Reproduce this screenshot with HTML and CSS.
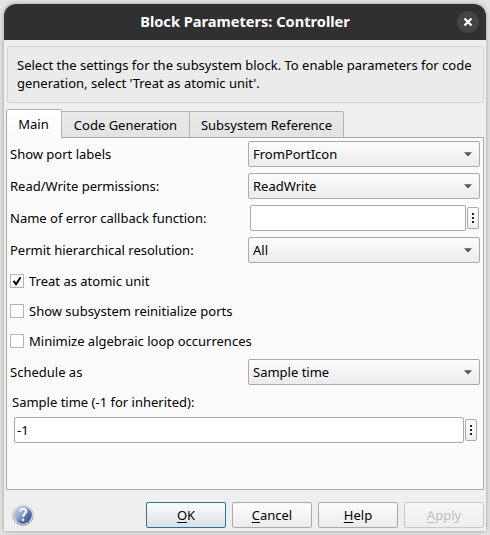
FILE: index.html
```
<!DOCTYPE html>
<html lang="en">
<head>
<meta charset="utf-8">
<title>Block Parameters: Controller</title>
<link rel="stylesheet" href="styles.css">
</head>
<body>
<main class="window">
  <header class="titlebar">
    <h1 class="title">Block Parameters: Controller</h1>
    <button class="close" aria-label="Close"><svg width="10" height="10" viewBox="0 0 10 10"><path d="M1.5 1.5 8.5 8.5M8.5 1.5 1.5 8.5" stroke="#fff" stroke-width="2.2"/></svg></button>
  </header>
  <p class="description">Select the settings for the subsystem block. To enable parameters for code<br>generation, select 'Treat as atomic unit'.</p>
  <nav class="tabs">
    <div class="tab tab-main">Main</div>
    <div class="tab tab-code">Code Generation</div>
    <div class="tab tab-ref">Subsystem Reference</div>
  </nav>
  <section class="pane">
    <div class="row"><span>Show port labels</span><div class="combo">FromPortIcon<svg class="arrow" width="8" height="5" viewBox="0 0 8 5"><path d="M0 .3h8L4 4.5z"/></svg></div></div>
    <div class="row"><span>Read/Write permissions:</span><div class="combo">ReadWrite<svg class="arrow" width="8" height="5" viewBox="0 0 8 5"><path d="M0 .3h8L4 4.5z"/></svg></div></div>
    <div class="row"><span>Name of error callback function:</span><div class="entry entry-short"><div class="field"></div><div class="more"><i></i><i></i><i></i></div></div></div>
    <div class="row"><span>Permit hierarchical resolution:</span><div class="combo">All<svg class="arrow" width="8" height="5" viewBox="0 0 8 5"><path d="M0 .3h8L4 4.5z"/></svg></div></div>
    <div class="checks">
      <div class="check"><span class="box"><svg width="12" height="12" viewBox="0 0 12 12"><path d="M2.6 5.8 5 9.2 9.6 2.3" fill="none" stroke="#000" stroke-width="2"/></svg></span>Treat as atomic unit</div>
      <div class="check"><span class="box"></span>Show subsystem reinitialize ports</div>
      <div class="check"><span class="box"></span>Minimize algebraic loop occurrences</div>
    </div>
    <div class="row"><span>Schedule as</span><div class="combo">Sample time<svg class="arrow" width="8" height="5" viewBox="0 0 8 5"><path d="M0 .3h8L4 4.5z"/></svg></div></div>
    <div class="sample-label">Sample time (-1 for inherited):</div>
    <div class="entry entry-long"><div class="field">-1</div><div class="more"><i></i><i></i><i></i></div></div>
  </section>
  <footer class="footer">
    <svg class="help" width="22" height="22" viewBox="0 0 22 22">
      <defs>
        <linearGradient id="ball" x1="0" y1="0" x2="1" y2="1"><stop offset=".1" stop-color="#c0cbe8"/><stop offset=".45" stop-color="#8fa3d3"/><stop offset=".65" stop-color="#5069aa"/><stop offset="1" stop-color="#3c5292"/></linearGradient>
        <linearGradient id="rim" x1="0" y1="0" x2="0" y2="1"><stop offset="0" stop-color="#dcdcdc"/><stop offset="1" stop-color="#8c8c8c"/></linearGradient>
      </defs>
      <circle cx="11" cy="11" r="10.3" fill="#e6e6e6" stroke="url(#rim)"/>
      <circle cx="11" cy="11" r="8.9" fill="url(#ball)"/>
      <path d="M8 7.4C8.3 5.5 9.5 4.8 11.1 4.8c1.8 0 2.9 1 2.9 2.6 0 2.2-2.8 2.7-2.8 5.5" fill="none" stroke="#fff" stroke-width="2"/>
      <circle cx="11.1" cy="15.9" r="1.3" fill="#fff"/>
    </svg>
    <div class="buttons">
      <button class="btn btn-default"><span class="key">O</span>K</button>
      <button class="btn"><span class="key">C</span>ancel</button>
      <button class="btn"><span class="key">H</span>elp</button>
      <button class="btn btn-off" disabled><span class="key">A</span>pply</button>
    </div>
  </footer>
</main>
</body>
</html>
```
FILE: styles.css
```
* { box-sizing: border-box; }
body {
  margin: 0;
  width: 490px;
  height: 535px;
  padding: 4px;
  overflow: hidden;
  background: #e4e4e4;
  color: #000;
  font: 13px/18px "Noto Sans", sans-serif;
}
.window {
  display: flex;
  flex-direction: column;
  width: 482px;
  height: 527px;
  background: #efefef;
  border-radius: 12px 12px 0 0;
  box-shadow: 0 0 5px rgba(0, 0, 0, .32);
}
.titlebar {
  display: grid;
  grid-template-columns: 30px 1fr 30px;
  align-items: center;
  height: 36px;
  flex: none;
  background: #303030;
  border-radius: 12px 12px 0 0;
  color: #fff;
}
.title {
  grid-column: 2;
  margin: 0;
  text-align: center;
  font-size: 14.6px;
  font-weight: 700;
  line-height: 18px;
  padding-bottom: 2px;
}
.close {
  display: flex;
  align-items: center;
  justify-content: center;
  width: 22px;
  height: 22px;
  margin-left: 1px;
  padding: 0;
  border: 0;
  border-radius: 50%;
  background: #444;
}
.description {
  flex: none;
  height: 57px;
  margin: 6px 2px 0 3px;
  padding: 9px 9px;
  border: 1px solid #d3d3d3;
  border-radius: 2px;
  background: #ebebeb;
  white-space: nowrap;
}
.tabs {
  display: flex;
  align-items: flex-end;
  flex: none;
  height: 28px;
  margin: 6px 2px 0;
}
.tab {
  height: 26px;
  border: 1px solid #b4b4b4;
  border-bottom: 0;
  border-left: 0;
  background: linear-gradient(#e9e9e9, #e3e3e3);
  text-align: center;
  line-height: 27px;
}
.tab-main {
  width: 56px;
  height: 29px;
  margin-bottom: -1px;
  padding-right: 1px;
  border-left: 1px solid #aaa;
  border-radius: 2px 2px 0 0;
  background: linear-gradient(#fff, #fbfbfb);
  line-height: 29px;
  z-index: 1;
}
.tab-code { width: 128px; }
.tab-ref { width: 154px; border-top-right-radius: 2px; }
.pane {
  flex: none;
  height: 353px;
  margin: 0 2px;
  padding: 3px 3px 0;
  border: 1px solid #aaa;
  background: #fbfbfb;
}
.row {
  display: flex;
  align-items: center;
  justify-content: space-between;
  height: 26px;
}
.row + .row { margin-top: 6px; }
.combo {
  display: flex;
  align-items: center;
  justify-content: space-between;
  width: 232px;
  height: 26px;
  padding: 0 7px 0 4px;
  border: 1px solid #aaa;
  border-radius: 2px;
  background: linear-gradient(#fdfdfd, #ebebeb);
}
.arrow { fill: #555; }
.entry {
  display: flex;
  align-items: center;
  gap: 1px;
  height: 26px;
}
.entry-short { width: 229px; margin-right: 1px; }
.entry-long { width: 463px; margin: 6px 0 0 4px; }
.field {
  flex: 1;
  height: 26px;
  padding-left: 2px;
  border: 1px solid #aaa;
  border-radius: 2px;
  background: #fff;
  line-height: 25px;
}
.more {
  display: flex;
  flex-direction: column;
  align-items: center;
  justify-content: center;
  gap: 2px;
  width: 12px;
  height: 22px;
  border: 1px solid #aaa;
  border-radius: 2px;
  background: linear-gradient(#fdfdfd, #eee);
}
.more i { width: 2px; height: 2px; background: #222; }
.checks {
  display: flex;
  flex-direction: column;
  gap: 12px;
  margin: 9px 0;
}
.check {
  display: flex;
  align-items: center;
  gap: 5px;
  height: 18px;
}
.box {
  width: 14px;
  height: 14px;
  border: 1px solid #b4b4b4;
  background: #fff;
}
.box svg { display: block; }
.sample-label { margin: 8px 0 0 2px; }
.footer {
  display: flex;
  align-items: center;
  justify-content: space-between;
  height: 26px;
  margin: 12px 2px 0 8px;
}
.buttons { display: flex; gap: 6px; }
.btn {
  width: 80px;
  height: 26px;
  padding: 0 0 1px;
  border: 1px solid #aaa;
  border-radius: 2px;
  background: linear-gradient(#fdfdfd, #ebebeb);
  color: #000;
  font: inherit;
}
.btn-default {
  border-color: #2874a0;
  background: linear-gradient(#fcfdfd, #d9e1e6);
}
.btn-off {
  border-color: #c8c8c8;
  background: linear-gradient(#f7f7f7, #eee);
  color: #bebebe;
}
.key {
  text-decoration: underline;
  text-decoration-thickness: 1px;
  text-underline-offset: 2px;
  text-decoration-skip-ink: none;
}
```
